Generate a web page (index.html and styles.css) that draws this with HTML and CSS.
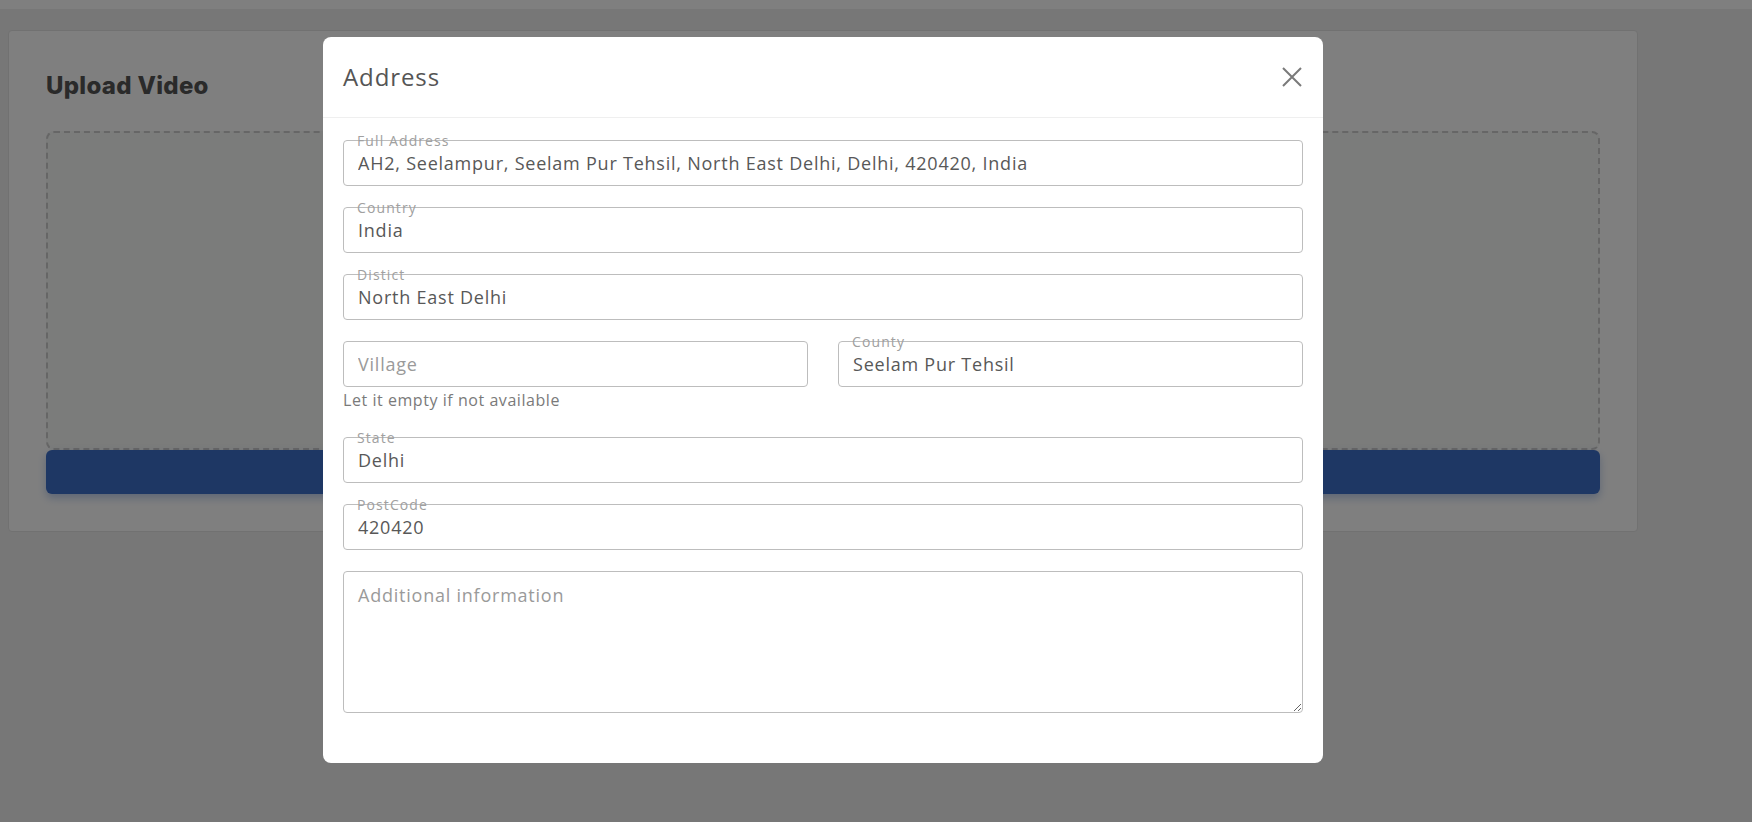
FILE: index.html
```html
<!DOCTYPE html>
<html lang="en">
<head>
<meta charset="utf-8">
<title>Upload Video</title>
<link rel="stylesheet" href="styles.css">
</head>
<body>
  <div class="topbar"></div>
  <main class="page">
    <section class="card">
      <h2 class="card-title">Upload Video</h2>
      <div class="dropzone"></div>
      <button class="upload-btn" type="button"></button>
    </section>
  </main>

  <div class="backdrop">
    <div class="modal">
      <div class="modal-header">
        <h5 class="modal-title">Address</h5>
        <button class="close" type="button" aria-label="Close">
          <svg width="20" height="20" viewBox="0 0 20 20"><path d="M1 1L19 19M19 1L1 19" stroke="#7a7a7a" stroke-width="2" fill="none"/></svg>
        </button>
      </div>
      <div class="modal-body">
        <div class="field">
          <label class="float-label">Full Address</label>
          <input class="input" type="text" value="AH2, Seelampur, Seelam Pur Tehsil, North East Delhi, Delhi, 420420, India">
        </div>
        <div class="field">
          <label class="float-label">Country</label>
          <input class="input" type="text" value="India">
        </div>
        <div class="field">
          <label class="float-label">Distict</label>
          <input class="input" type="text" value="North East Delhi">
        </div>
        <div class="row">
          <div class="col">
            <div class="field field-tight">
              <input class="input" type="text" placeholder="Village">
            </div>
            <div class="help">Let it empty if not available</div>
          </div>
          <div class="col">
            <div class="field field-tight">
              <label class="float-label">County</label>
              <input class="input" type="text" value="Seelam Pur Tehsil">
            </div>
          </div>
        </div>
        <div class="field">
          <label class="float-label">State</label>
          <input class="input" type="text" value="Delhi">
        </div>
        <div class="field">
          <label class="float-label">PostCode</label>
          <input class="input" type="text" value="420420">
        </div>
        <div class="field field-last">
          <textarea class="textarea" placeholder="Additional information"></textarea>
        </div>
      </div>
    </div>
  </div>
</body>
</html>
```
FILE: styles.css
```css
* { box-sizing: border-box; }

html, body {
  margin: 0;
  padding: 0;
}

body {
  background: #eeeeee;
  font-family: "Open Sans", "Liberation Sans", sans-serif;
  height: 822px;
  overflow: hidden;
}

.topbar {
  height: 9px;
  background: #ffffff;
}

.page {
  padding: 21px 114px 0 8px;
}

.card {
  background: #ffffff;
  border: 1px solid #e2e2e2;
  border-radius: 4px;
  padding: 30px 37px 37px 37px;
  height: 502px;
}

.card-title {
  margin: 0 0 22px 0;
  padding-top: 2px;
  font-family: "Inter", "Lato", sans-serif;
  font-weight: 800;
  font-size: 24px;
  line-height: 46px;
  color: #555555;
  letter-spacing: 0.3px;
}

.dropzone {
  height: 319px;
  border: 2px dashed #cccccc;
  border-radius: 8px;
  background: #f6f8f6;
}

.upload-btn {
  display: block;
  width: 100%;
  height: 44px;
  border: none;
  border-radius: 6px;
  background: #3c6ec8;
  box-shadow: 0 4px 8px rgba(60, 110, 200, 0.35);
}

.backdrop {
  position: fixed;
  inset: 0;
  background: rgba(0, 0, 0, 0.5);
}

.modal {
  width: 1000px;
  margin: 37px 0 0 323px;
  background: #ffffff;
  border-radius: 8px;
}

.modal-header {
  height: 81px;
  padding: 0 20px 1px 20px;
  border-bottom: 1px solid #efefef;
  display: flex;
  align-items: center;
  justify-content: space-between;
}

.modal-title {
  margin: 0;
  font-family: "Open Sans", sans-serif;
  font-weight: 400;
  font-size: 24px;
  letter-spacing: 0.9px;
  color: #555555;
}

.close {
  border: none;
  background: none;
  padding: 0;
  width: 20px;
  height: 20px;
  margin-right: 1px;
  display: flex;
}

.modal-body {
  padding: 22px 20px 50px 20px;
}

.field {
  position: relative;
  margin-bottom: 21px;
}

.field-tight { margin-bottom: 0; }
.field-last { margin-bottom: 0; }

.float-label {
  position: absolute;
  top: -8px;
  left: 14px;
  font-size: 14px;
  line-height: 18px;
  letter-spacing: 1.1px;
  color: #a0a0a0;
  font-family: "Open Sans", sans-serif;
  font-weight: 400;
}

.input {
  display: block;
  width: 100%;
  height: 46px;
  padding: 0 14px;
  border: 1px solid #bdbdbd;
  border-radius: 4px;
  font-family: "Open Sans", sans-serif;
  font-size: 18px;
  font-weight: 400;
  letter-spacing: 0.77px;
  color: #585858;
  background: #ffffff;
  outline: none;
}

.input::placeholder,
.textarea::placeholder {
  color: #9a9a9a;
}

.row {
  display: flex;
  gap: 30px;
  margin-bottom: 25px;
}

.col { flex: 1; }

.help {
  margin-top: 1px;
  font-size: 16px;
  font-weight: 400;
  line-height: 24px;
  letter-spacing: 0.55px;
  color: #7a7a7a;
}

.textarea {
  display: block;
  width: 100%;
  height: 142px;
  padding: 11px 14px;
  border: 1px solid #bdbdbd;
  border-radius: 4px;
  font-family: "Open Sans", sans-serif;
  font-size: 18px;
  font-weight: 400;
  letter-spacing: 0.77px;
  color: #585858;
  outline: none;
}
```
